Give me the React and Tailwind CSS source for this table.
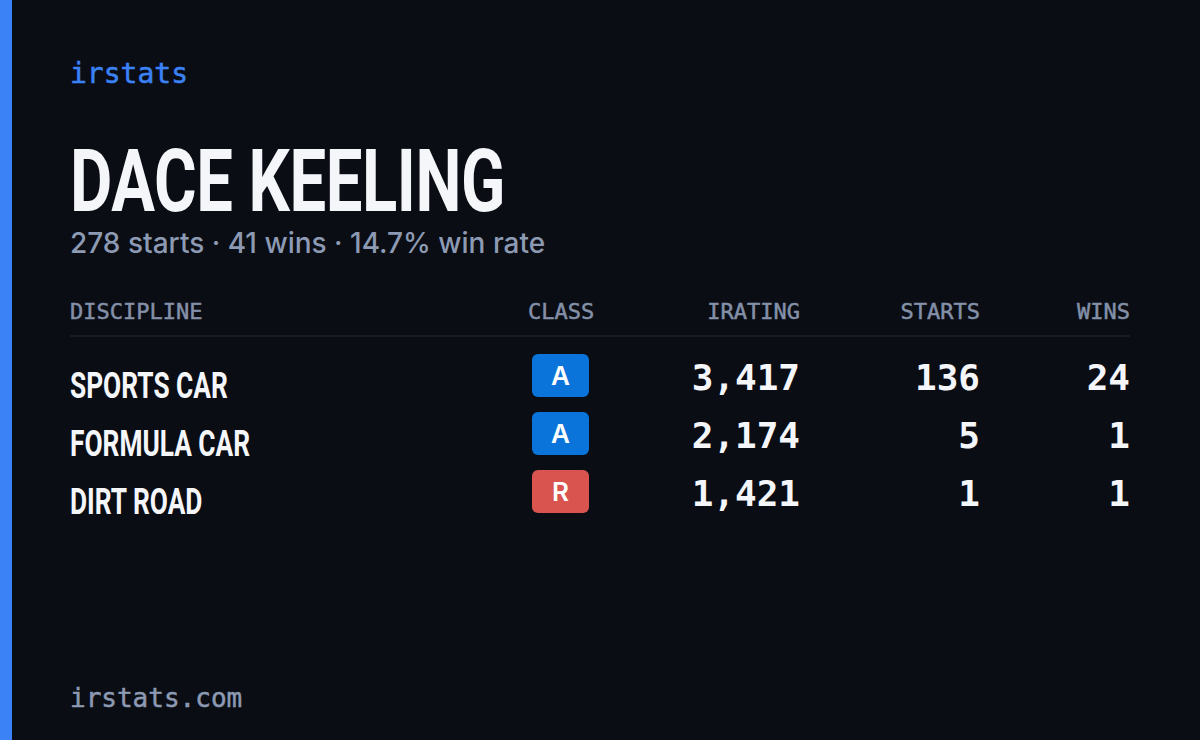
import React from "react";

const rows = [
  { name: "SPORTS CAR", cls: "A", color: "bg-[#0a74da]", ir: "3,417", starts: "136", wins: "24" },
  { name: "FORMULA CAR", cls: "A", color: "bg-[#0a74da]", ir: "2,174", starts: "5", wins: "1" },
  { name: "DIRT ROAD", cls: "R", color: "bg-[#d9534f]", ir: "1,421", starts: "1", wins: "1" },
];

const mono = { fontFamily: '"DejaVu Sans Mono", "Liberation Mono", monospace' };
const cond = { fontFamily: 'Roboto, "Liberation Sans", sans-serif' };
const sans = { fontFamily: 'Inter, Roboto, "Liberation Sans", sans-serif' };

export default function App() {
  return (
    <div className="flex h-[740px] w-[1200px] overflow-hidden bg-[#0a0d14]">
      <div className="w-3 shrink-0 bg-[#3b82f6]" />
      <div className="flex flex-1 flex-col pl-[58px] pr-[58px] pt-[56px] pb-[26px]">
        <div style={mono} className="text-[28px] leading-[36px] text-[#3b82f6] [-webkit-text-stroke:0.5px_#3b82f6]">irstats</div>

        <div className="mt-[46px] h-[86px] overflow-visible whitespace-nowrap">
          <span style={cond} className="inline-block origin-left scale-x-[0.74] pt-[3px] text-[88px] font-bold leading-[80px] tracking-[-0.5px] text-[#f5f6fa]">
            DACE KEELING
          </span>
        </div>
        <div style={sans} className="mt-[2px] text-[28px] font-medium leading-[34px] text-[#8d9ab3]">
          278 starts · 41 wins · 14.7% win rate
        </div>

        <div className="mt-[39px] w-[1060px]">
          <div
            style={mono}
            className="grid grid-cols-[458px_65px_207px_180px_150px] border-b-2 border-[#171b25] pb-[10px] text-[22px] leading-[26px] text-[#8390a8] [-webkit-text-stroke:0.5px_#8390a8]"
          >
            <div>DISCIPLINE</div>
            <div className="text-center">CLASS</div>
            <div className="text-right">IRATING</div>
            <div className="text-right">STARTS</div>
            <div className="text-right">WINS</div>
          </div>
          <div className="mt-[15px] flex flex-col gap-[15px]">
            {rows.map((r) => (
              <div key={r.name} className="grid h-[43px] grid-cols-[458px_65px_207px_180px_150px] items-center">
                <div className="h-[43px] whitespace-nowrap pt-[14px]">
                  <span style={cond} className="inline-block origin-left scale-x-[0.73] text-[36px] font-bold leading-[36px] text-[#f5f6fa]">
                    {r.name}
                  </span>
                </div>
                <div className="flex justify-center">
                  <div style={sans} className={`flex h-[43px] w-[57px] items-center justify-center rounded-[6px] ${r.color} text-[26px] font-semibold text-white`}>
                    {r.cls}
                  </div>
                </div>
                <div style={mono} className="pt-[6px] text-right text-[36px] font-bold leading-[40px] text-[#f5f6fa]">{r.ir}</div>
                <div style={mono} className="pt-[6px] text-right text-[36px] font-bold leading-[40px] text-[#f5f6fa]">{r.starts}</div>
                <div style={mono} className="pt-[6px] text-right text-[36px] font-bold leading-[40px] text-[#f5f6fa]">{r.wins}</div>
              </div>
            ))}
          </div>
        </div>

        <div className="flex-1" />
        <div style={mono} className="text-[26px] leading-[32px] text-[#8d9ab3] [-webkit-text-stroke:0.5px_#8d9ab3]">irstats.com</div>
      </div>
    </div>
  );
}
